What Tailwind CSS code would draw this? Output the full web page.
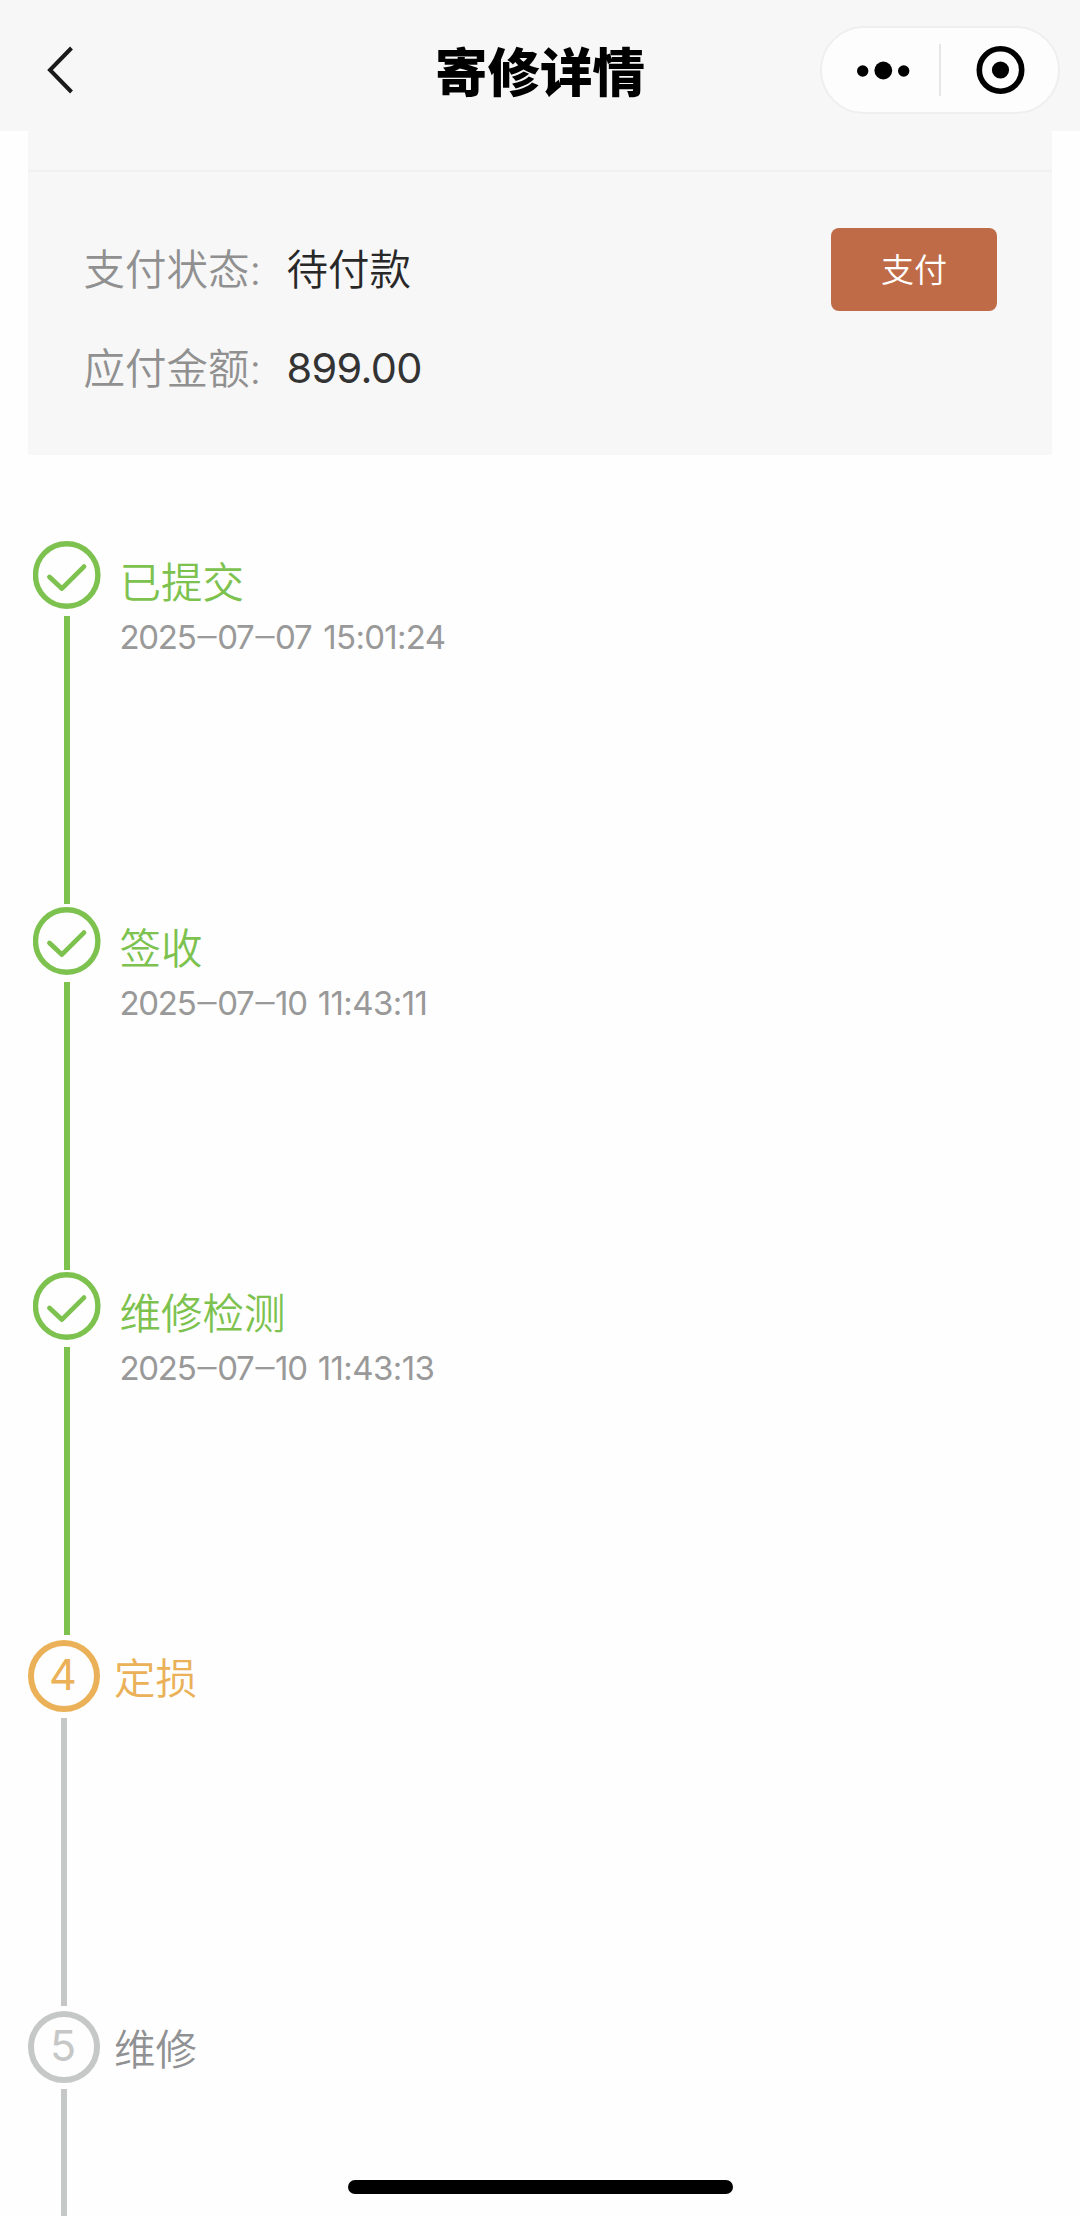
<!DOCTYPE html>
<html lang="zh-CN">
<head>
<meta charset="utf-8">
<title>寄修详情</title>
<script src="https://cdn.jsdelivr.net/npm/@tailwindcss/browser@4"></script>
</head>
<body class="flex h-[2216px] w-[1080px] flex-col overflow-hidden bg-[#fefefe] font-[350] font-[Inter,'Noto_Sans_CJK_SC',sans-serif]">
  <header class="relative flex h-[131px] shrink-0 items-center justify-between bg-[#f7f7f7] pr-5 pl-[46px]">
    <svg class="mt-[9px] h-[50px] w-[30px]" viewBox="0 0 30 50" fill="none" stroke="#1a1a1a" stroke-width="4"><path d="M25.500 3 L4 25 L25.500 47"/></svg>
    <h1 class="absolute inset-x-0 top-[34px] text-center text-[52.500px] leading-[78px] font-black text-black">寄修详情</h1>
    <div class="mt-[9px] flex h-[88px] w-[240px] items-center rounded-full border-2 border-[#efefef] bg-[#fdfdfd]">
      <svg class="h-[84px] w-[236px]" viewBox="822 28 236 84">
        <circle cx="862.700" cy="71" r="5.700"/><circle cx="883.300" cy="70.500" r="8.900"/><circle cx="903.700" cy="71" r="5.700"/>
        <path d="M940 44V96" stroke="#dedede" stroke-width="1.500"/>
        <circle cx="1000.500" cy="70" r="21.200" fill="none" stroke="#000" stroke-width="5.600"/><circle cx="1000.500" cy="70" r="8.600"/>
      </svg>
    </div>
  </header>

  <section class="mx-7 flex h-[324px] shrink-0 flex-col rounded-b-[3px] bg-[#f7f7f7]">
    <div class="h-[41px] shrink-0 border-b-2 border-[#f1f1f1]"></div>
    <div class="flex justify-between pt-[47px] pr-[55px] pl-[55.500px] text-[41.500px] leading-[100px]">
      <div class="pt-[3px]">
        <div class="-mt-0.5 flex h-[99px]"><span class="w-[203px] text-[#909090]">支付状态:</span><span class="text-[#282828]">待付款</span></div>
        <div class="flex h-[100px]"><span class="w-[203px] text-[#909090]">应付金额:</span><span class="-mt-px font-normal tracking-[-0.700px] text-[#333]">899.00</span></div>
      </div>
      <button class="mt-[9px] h-[83px] w-[166px] rounded-lg bg-[#bf6b47] text-[33px] leading-[80px] text-white">支付</button>
    </div>
  </section>

  <ol class="mt-[86px] flex flex-col pl-7">
    <li class="flex h-[365.500px] gap-[18.500px]">
      <div class="ml-[5px] flex w-[68px] flex-col items-center">
        <svg class="h-[68px] w-[68px] shrink-0" viewBox="0 0 68 68" fill="none" stroke="#7dc24f"><circle cx="33.700" cy="34" r="31.200" stroke-width="5.400"/><path d="M16.500 36 L28.800 47.600 L51 25.600" stroke-width="4.800" stroke-linecap="round" stroke-linejoin="round"/></svg>
        <div class="mt-[7px] h-[288px] w-1.5 bg-[#7dc24f]"></div>
      </div>
      <div><h2 class="mt-[13px] h-[57px] text-[41.500px] leading-[58px] text-[#7dc24f]">已提交</h2><p class="h-[52px] text-[33px] leading-[52px] font-normal tracking-[-1.300px] [word-spacing:4px] text-[#999]">2025<span class="mx-0.5 text-[38px] leading-none font-light">–</span>07<span class="mx-0.5 text-[38px] leading-none font-light">–</span>07 <span class="tracking-[-0.700px]">15:01:24</span></p></div>
    </li>
    <li class="flex h-[365.500px] gap-[18.500px]">
      <div class="ml-[5px] flex w-[68px] flex-col items-center">
        <svg class="h-[68px] w-[68px] shrink-0" viewBox="0 0 68 68" fill="none" stroke="#7dc24f"><circle cx="33.700" cy="34" r="31.200" stroke-width="5.400"/><path d="M16.500 36 L28.800 47.600 L51 25.600" stroke-width="4.800" stroke-linecap="round" stroke-linejoin="round"/></svg>
        <div class="mt-[7px] h-[288px] w-1.5 bg-[#7dc24f]"></div>
      </div>
      <div><h2 class="mt-[13px] h-[57px] text-[41.500px] leading-[58px] text-[#7dc24f]">签收</h2><p class="h-[52px] text-[33px] leading-[52px] font-normal tracking-[-1.300px] [word-spacing:3px] text-[#999]">2025<span class="mx-0.5 text-[38px] leading-none font-light">–</span>07<span class="mx-0.5 text-[38px] leading-none font-light">–</span>10 <span class="tracking-[-0.600px]">11:43:11</span></p></div>
    </li>
    <li class="flex h-[368px] gap-[18.500px]">
      <div class="ml-[5px] flex w-[68px] flex-col items-center">
        <svg class="h-[68px] w-[68px] shrink-0" viewBox="0 0 68 68" fill="none" stroke="#7dc24f"><circle cx="33.700" cy="34" r="31.200" stroke-width="5.400"/><path d="M16.500 36 L28.800 47.600 L51 25.600" stroke-width="4.800" stroke-linecap="round" stroke-linejoin="round"/></svg>
        <div class="mt-[7px] h-[288px] w-1.5 bg-[#7dc24f]"></div>
      </div>
      <div><h2 class="mt-[13px] h-[57px] text-[41.500px] leading-[58px] text-[#7dc24f]">维修检测</h2><p class="h-[52px] text-[33px] leading-[52px] font-normal tracking-[-1.300px] [word-spacing:3px] text-[#999]">2025<span class="mx-0.5 text-[38px] leading-none font-light">–</span>07<span class="mx-0.5 text-[38px] leading-none font-light">–</span>10 <span class="tracking-[-0.600px]">11:43:13</span></p></div>
    </li>
    <li class="flex h-[371px] gap-3.5">
      <div class="flex w-[72px] flex-col items-center">
        <div class="flex h-[72px] w-[72px] shrink-0 items-center justify-center rounded-full border-[6px] border-[#eab158] pr-0.5 pb-1 text-[43px] leading-[60px] font-normal text-[#eab158]">4</div>
        <div class="mt-1.5 h-[288px] w-1.5 bg-[#c6c7c7]"></div>
      </div>
      <h2 class="mt-[10px] h-[58px] text-[41.500px] leading-[58px] text-[#eab158]">定损</h2>
    </li>
    <li class="flex h-[205px] gap-3.5 overflow-hidden">
      <div class="flex w-[72px] flex-col items-center">
        <div class="flex h-[72px] w-[72px] shrink-0 items-center justify-center rounded-full border-[6px] border-[#c6c7c7] pr-0.5 pb-1 text-[43px] leading-[60px] font-normal text-[#c6c7c7]">5</div>
        <div class="mt-1.5 w-1.5 flex-1 bg-[#c6c7c7]"></div>
      </div>
      <h2 class="mt-[10px] h-[58px] text-[41.500px] leading-[58px] text-[#909193]">维修</h2>
    </li>
  </ol>

  <div class="fixed bottom-[22px] left-[348px] h-3.5 w-[385px] rounded-full bg-black"></div>
</body>
</html>
